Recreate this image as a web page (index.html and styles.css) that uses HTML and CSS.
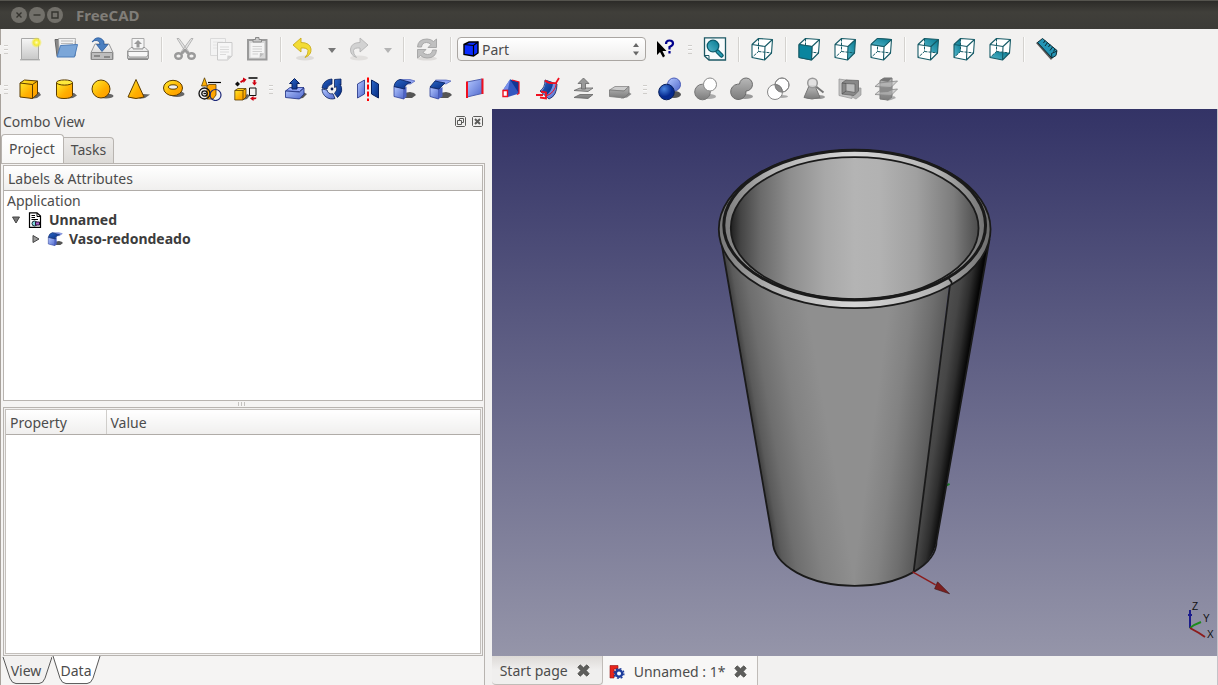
FILE: index.html
```html
<!DOCTYPE html>
<html lang="en">
<head>
    <meta charset="UTF-8">
    <meta name="viewport" content="width=device-width, initial-scale=1.0">
    <title>FreeCAD</title>
    <link rel="stylesheet" href="styles.css">
</head>
<body>
    <!-- Shared gradients and symbols -->
    <svg class="defs" width="0" height="0" aria-hidden="true">
        <defs>
            <linearGradient id="gold" x1="0" y1="0" x2="1" y2="1"><stop offset="0" stop-color="#ffee30"/><stop offset=".6" stop-color="#ffae00"/><stop offset="1" stop-color="#ff9a00"/></linearGradient>
            <linearGradient id="blue" x1="0" y1="0" x2="1" y2="1"><stop offset="0" stop-color="#2c68c8"/><stop offset="1" stop-color="#062a80"/></linearGradient>
            <linearGradient id="lilac" x1="0" y1="0" x2="1" y2="1"><stop offset="0" stop-color="#b4c8ff"/><stop offset="1" stop-color="#5068cc"/></linearGradient>
            <linearGradient id="grey" x1="0" y1="0" x2="0" y2="1"><stop offset="0" stop-color="#b8b8b8"/><stop offset="1" stop-color="#7c7c7c"/></linearGradient>
            <linearGradient id="pale" x1="0" y1="0" x2="0" y2="1"><stop offset="0" stop-color="#f6f6f6"/><stop offset="1" stop-color="#c8c8c8"/></linearGradient>
            <linearGradient id="teal" x1="0" y1="1" x2="1" y2="0"><stop offset="0" stop-color="#57b8cc"/><stop offset="1" stop-color="#04788f"/></linearGradient>
            <radialGradient id="ball" cx=".35" cy=".3"><stop offset="0" stop-color="#4a86e0"/><stop offset="1" stop-color="#062a90"/></radialGradient>
            <radialGradient id="sun"><stop offset="0" stop-color="#fffcc0"/><stop offset=".5" stop-color="#f4ea30"/><stop offset="1" stop-color="#f4ea30" stop-opacity="0"/></radialGradient>
        </defs>
        <symbol id="wire" viewBox="0 0 24 24">
            <path class="dash" d="M8.500 1.500V14.500L2 20.500M8.500 14.500L22 16"/>
            <path class="edge" d="M2 7.500L15 9.500L14.500 23L2 20.500ZM2 7.500L8.500 1.500L22.500 2.500L15 9.500M22.500 2.500L21.500 16L14.500 23"/>
        </symbol>
        <symbol id="rounded" viewBox="0 0 24 24">
            <path fill="#555" d="M12 20V16L18 15L22 16L24 18L20 21H12Z"/>
            <path fill="url(#lilac)" stroke="#2c3f98" stroke-width=".8" d="M2 9.500L12 11.500V22L2 19.500Z"/>
            <path fill="#4c62c4" d="M12 11.500L14.500 9.500V19.500L12 22Z"/>
            <path fill="#8fa3f2" stroke="#3c50b0" stroke-width=".6" d="M8 2.500H18L23 4L18.500 7H12Z"/>
            <path fill="url(#blue)" stroke="#08205c" stroke-width=".8" d="M2 9.500Q3 3.500 8 2.500L19 5.500Q13 6.500 12.500 12Z"/>
        </symbol>
        <symbol id="bevel" viewBox="0 0 24 24">
            <path fill="#555" d="M12 20V16L18 15L22 16L24 18L20 21H12Z"/>
            <path fill="url(#lilac)" stroke="#2c3f98" stroke-width=".8" d="M2 10.500L10.500 12V22L2 19.500Z"/>
            <path fill="#4c62c4" d="M10.500 12L14.500 10V19.500L10.500 22Z"/>
            <path fill="#8fa3f2" stroke="#3c50b0" stroke-width=".6" d="M7.500 3H18L23 4L18 7L8 5Z"/>
            <path fill="url(#blue)" stroke="#08205c" stroke-width=".8" d="M2 10L7 4L17 6L11 12Z"/>
        </symbol>
        <symbol id="close" viewBox="0 0 12 12">
            <path fill="#5e5e5c" stroke="#4a4a48" stroke-width=".8" d="M3 .8L6 3.500L9 .8L11.200 3L8.500 6L11.200 9L9 11.200L6 8.500L3 11.200L.8 9L3.500 6L.8 3Z"/>
        </symbol>
    </svg>

    <header class="titlebar">
        <button class="win-btn" aria-label="Close"><svg viewBox="0 0 16 16"><path d="M5.500 5.500L10.500 10.500M10.500 5.500L5.500 10.500"/></svg></button>
        <button class="win-btn" aria-label="Minimize"><svg viewBox="0 0 16 16"><path d="M4.500 8H11.500"/></svg></button>
        <button class="win-btn" aria-label="Maximize"><svg viewBox="0 0 16 16"><path d="M5 5H11V11H5Z"/></svg></button>
        <h1>FreeCAD</h1>
    </header>

    <!-- File, edit and view tools -->
    <div class="toolbar" role="toolbar" aria-label="Main">
        <span class="grip"></span>
        <button class="tool" aria-label="New"><svg viewBox="0 0 24 24"><path fill="#bbb" d="M2 22H22V23.500H2Z"/><path fill="url(#pale)" stroke="#a8a8a8" d="M3.500 1.500H20.500V22.500H3.500Z"/><circle cx="18.500" cy="5.500" r="5.500" fill="url(#sun)"/></svg></button>
        <button class="tool" aria-label="Open"><svg viewBox="0 0 24 24"><path fill="#888" stroke="#666" d="M1 2.500H8L9.500 4H21V19H3Z"/><path fill="#f2f2f2" stroke="#999" stroke-width=".7" d="M4.500 1.500H21.500L20.500 12H5Z"/><path stroke="#bbb" d="M7 4H19M7 6.500H19"/><path fill="#7ba6d8" stroke="#4c7cb8" d="M6.500 8.500L23.500 7.500L20.500 20H3Z"/></svg></button>
        <button class="tool" aria-label="Save"><svg viewBox="0 0 24 24"><path fill="url(#pale)" stroke="#999" d="M5 7H19L23 15.500V22.500H1V15.500Z"/><path fill="#bdbdbd" stroke="#888" d="M1.500 15.500H22.500V22.500H1.500Z"/><path stroke="#777" stroke-width="1.500" d="M4 19H10M14 20H20"/><path fill="#4a7fc0" stroke="#2c5c9c" stroke-width=".8" d="M2 5Q6-1 11 1.500Q15 3.500 14 7.500H18L12 14.500L6.500 7.500H10Q10 4 7 3.500Q4.500 3 2 5Z"/></svg></button>
        <button class="tool" aria-label="Print"><svg viewBox="0 0 24 24"><path fill="#f5f5f5" stroke="#aaa" d="M6 1.500H18V12H6Z"/><path fill="#999" d="M12 3L16 7H13.500V10.500H10.500V7H8Z"/><path fill="url(#pale)" stroke="#999" d="M5 10.500H7V12H17V10.500H19L22.500 14V21.500H1.500V14Z"/><path fill="#f7f7f7" stroke="#999" d="M2 14.500H22V18L20.500 20H3.500L2 18Z"/><path stroke="#888" d="M2 22.500H22"/></svg></button>
        <span class="sep"></span>
        <button class="tool" aria-label="Cut"><svg viewBox="0 0 24 24"><path fill="#e3e3e3" stroke="#a8a8a8" stroke-width=".8" d="M4 1.500L6 1.500L16 15L13.500 16.500ZM20 1.500L18 1.500L8 15L10.500 16.500Z"/><g stroke="#9a9a9a" stroke-width="2.400"><ellipse cx="5.500" cy="19" rx="3.300" ry="2.800"/><ellipse cx="18.500" cy="19" rx="3.300" ry="2.800"/><path d="M8 17L12 13L16 17"/></g></svg></button>
        <button class="tool" aria-label="Copy"><svg viewBox="0 0 24 24"><path fill="#f3f3f3" stroke="#dadada" d="M1.500 1.500H16.500V18.500H1.500Z"/><path stroke="#e4e4e4" d="M4 5H14M4 8H14M4 11H10"/><path fill="#f6f6f6" stroke="#cacaca" d="M8.500 5.500H23V19L18.500 23H8.500Z"/><path stroke="#dadada" d="M11 10H20M11 12.500H20M11 15H20M11 17.500H17"/><path fill="#d0d0d0" d="M18 23L18.500 18.500L23 19Z"/></svg></button>
        <button class="tool" aria-label="Paste"><svg viewBox="0 0 24 24"><path fill="#d8d8d8" stroke="#9a9a9a" stroke-width="2" d="M3 3H21.500V22.500H3Z"/><path fill="#f4f4f4" d="M5.500 6H19V16L15 20.500H5.500Z"/><path stroke="#d0d0d0" d="M7.500 9.500H17M7.500 12H17M7.500 14.500H17M7.500 17H13"/><path fill="#bbb" d="M14.500 21L15 16L19 16.500Z"/><path fill="#c8c8c8" stroke="#8a8a8a" d="M8 5V2.500H10.500V.5H14V2.500H16.500V5Z"/></svg></button>
        <span class="sep"></span>
        <button class="tool" aria-label="Undo"><svg viewBox="0 0 24 24"><ellipse cx="13" cy="21" rx="9" ry="2.500" fill="#dedcda"/><path fill="#f3dc35" stroke="#c9ac1c" stroke-width=".9" d="M9 1L1 8L9 15V11Q15 10.500 16 13.500Q16.500 17 13 20.500Q19.500 18 19 12Q18 5.500 9 5.500Z"/></svg></button>
        <button class="drop" aria-label="Undo history"></button>
        <button class="tool" aria-label="Redo"><svg viewBox="0 0 24 24"><ellipse cx="11" cy="21" rx="9" ry="2.500" fill="#e2e0de"/><path fill="#d2d2d2" stroke="#b4b4b4" stroke-width=".9" d="M12 1L20 8L12 15V11Q6 10.500 5.500 13.500Q5 17 8.500 20.500Q2 18 2.500 12Q3.500 5.500 12 5.500Z"/></svg></button>
        <button class="drop off" aria-label="Redo history"></button>
        <span class="sep"></span>
        <button class="tool" aria-label="Refresh"><svg viewBox="0 0 24 24"><ellipse cx="12" cy="21.500" rx="10" ry="2" fill="#dedcda"/><g fill="#c0c0c0" stroke="#a4a4a4" stroke-width=".9"><path d="M2.500 10Q3 2 12 2Q16 2 18.500 4.500L21.500 2V10.500H13L16 7.500Q14 5.500 11.500 5.500Q7 5.500 6.500 10Z"/><path d="M21.500 13Q21 21 12 21Q8 21 5.500 18.500L2.500 21V12.500H11L8 15.500Q10 17.500 12.500 17.500Q17 17.500 17.500 13Z"/></g></svg></button>
        <span class="sep"></span>
        <label class="workbench">
            <svg viewBox="0 0 16 16"><path fill="#0a2cff" stroke="#000" stroke-width="1.400" d="M1 3.500L6 1H15V12L10.500 15L1 13.500Z"/><path stroke="#000" stroke-width="1.200" d="M1 3.500L10.500 4.500L15 1M10.500 4.500V15"/></svg>
            <select aria-label="Workbench"><option>Part</option></select>
            <svg class="arrows" viewBox="0 0 8 14"><path fill="#666" d="M1 5L4 1L7 5ZM1 9.500L4 13.500L7 9.500Z"/></svg>
        </label>
        <button class="tool" aria-label="What's this?"><svg viewBox="0 0 24 24"><path fill="#000" d="M4 4V18L7 15L10 20.500L12 19L9.500 14H13.500Z"/><path stroke="#00008c" stroke-width="2.200" d="M13 7Q13 3.500 16.500 3.500Q20 3.500 20 6.500Q20 8.500 16.500 10V12.500M16.500 14V16.500"/></svg></button>
        <span class="grip"></span>
        <button class="tool" aria-label="Fit all"><svg viewBox="0 0 24 24"><path fill="#f7fbfc" stroke="#1c5864" stroke-width="1.300" d="M1.500 .8H22.500V23H6L1.500 19Z"/><path stroke="#1c5864" d="M1.500 18.500H6V23"/><path stroke="#0c5c6c" stroke-width="4.500" stroke-linecap="round" d="M14.500 14.500L18.500 18.500"/><path stroke="#259bb2" stroke-width="2" stroke-linecap="round" d="M14.500 14.500L18.500 18.500"/><circle cx="10" cy="9" r="5.800" fill="url(#teal)" stroke="#0c5c6c" stroke-width="1.300"/></svg></button>
        <span class="sep"></span>
        <button class="tool" aria-label="Axometric"><svg viewBox="0 0 24 24"><path fill="#fff" d="M2 7.500L8.500 1.500L22.500 2.500L21.500 16L14.500 23L2 20.500Z"/><use href="#wire"/></svg></button>
        <span class="sep"></span>
        <button class="tool" aria-label="Front"><svg viewBox="0 0 24 24"><path fill="#fff" d="M2 7.500L8.500 1.500L22.500 2.500L21.500 16L14.500 23L2 20.500Z"/><use href="#wire"/><path fill="#0a859e" stroke="#155a66" d="M2 7.500L15 9.500L14.500 23L2 20.500Z"/></svg></button>
        <button class="tool" aria-label="Right"><svg viewBox="0 0 24 24"><path fill="#fff" d="M2 7.500L8.500 1.500L22.500 2.500L21.500 16L14.500 23L2 20.500Z"/><path fill="url(#teal)" d="M15 9.500L22.500 2.500L21.500 16L14.500 23Z"/><use href="#wire"/></svg></button>
        <button class="tool" aria-label="Top"><svg viewBox="0 0 24 24"><path fill="#fff" d="M2 7.500L8.500 1.500L22.500 2.500L21.500 16L14.500 23L2 20.500Z"/><use href="#wire"/><path fill="url(#teal)" stroke="#155a66" d="M2 7.500L8.500 1.500L22.500 2.500L15 9.500Z"/></svg></button>
        <span class="sep"></span>
        <button class="tool" aria-label="Rear"><svg viewBox="0 0 24 24"><path fill="#fff" d="M2 7.500L8.500 1.500L22.500 2.500L21.500 16L14.500 23L2 20.500Z"/><path fill="url(#teal)" d="M8.500 1.500L22.500 2.500L21.500 16L15 15V9.500L8.500 8.500Z"/><use href="#wire"/></svg></button>
        <button class="tool" aria-label="Left"><svg viewBox="0 0 24 24"><path fill="#fff" d="M2 7.500L8.500 1.500L22.500 2.500L21.500 16L14.500 23L2 20.500Z"/><path fill="url(#teal)" d="M2 7.500L8.500 1.500V14.500L2 20.500Z"/><use href="#wire"/></svg></button>
        <button class="tool" aria-label="Bottom"><svg viewBox="0 0 24 24"><path fill="#fff" d="M2 7.500L8.500 1.500L22.500 2.500L21.500 16L14.500 23L2 20.500Z"/><path fill="url(#teal)" d="M2 20.500L8.500 14.500L21.500 16L14.500 23Z"/><use href="#wire"/></svg></button>
        <span class="sep"></span>
        <button class="tool" aria-label="Measure distance"><svg viewBox="0 0 24 24"><path fill="#555" d="M1 6L4 4L20 18L16 23Z"/><path fill="#2494b4" stroke="#0c2c34" d="M2.500 5.500L7.500 1.500L22 13.500L21 18.500L17 21Z"/><path stroke="#0c2c34" d="M10 3.500L8.500 6M12.500 5.500L10 9M15 7.500L13.500 10M17.500 10L15 13.500M20 12L18.500 14.500M17 21L16.500 16.500L22 14"/></svg></button>
    </div>

    <!-- Part workbench tools -->
    <div class="toolbar" role="toolbar" aria-label="Part">
        <span class="grip"></span>
        <button class="tool" aria-label="Box"><svg viewBox="0 0 24 24"><path fill="#666" d="M12 22L17 15H21L23 18L19 21Z"/><path fill="url(#gold)" stroke="#5c3c00" d="M2 6L6.500 3L19.500 4V17L14.500 21.500L2 20Z"/><path stroke="#5c3c00" d="M2 6L14.500 7.500L19.500 4M14.500 7.500V21.500"/></svg></button>
        <button class="tool" aria-label="Cylinder"><svg viewBox="0 0 24 24"><path fill="#666" d="M14 21.500L17 16H20L23 18.500L19 21Z"/><path fill="url(#gold)" stroke="#5c3c00" d="M2.500 5.500V18.500Q3 21.500 10 21.500T18.500 18.500V5.500"/><ellipse cx="10.500" cy="5.500" rx="8" ry="2.600" fill="#ffe93c" stroke="#5c3c00"/></svg></button>
        <button class="tool" aria-label="Sphere"><svg viewBox="0 0 24 24"><ellipse cx="16" cy="19" rx="7.500" ry="2.600" fill="#666"/><circle cx="11" cy="12" r="9" fill="url(#gold)" stroke="#5c3c00"/></svg></button>
        <button class="tool" aria-label="Cone"><svg viewBox="0 0 24 24"><path fill="#666" d="M13 22L17 17L24 17.500L19 21Z"/><path fill="url(#gold)" stroke="#5c3c00" d="M10 2.500L18 20Q10 23 2 20Z"/></svg></button>
        <button class="tool" aria-label="Torus"><svg viewBox="0 0 24 24"><ellipse cx="15" cy="17" rx="7.500" ry="3" fill="#666"/><ellipse cx="11" cy="11" rx="9.500" ry="7.700" fill="url(#gold)" stroke="#5c3c00"/><ellipse cx="11" cy="10" rx="4.500" ry="2.200" fill="#f2f1f0" stroke="#5c3c00"/></svg></button>
        <button class="tool" aria-label="Create primitives"><svg viewBox="0 0 24 24"><path fill="url(#gold)" stroke="#5c3c00" stroke-width=".8" d="M6.500 .8L9.500 9H3.500Z"/><path stroke="#000" stroke-width="1.200" d="M10 5.500H23"/><path fill="#ffa500" stroke="#5c3c00" stroke-width=".8" d="M9 9L11 7.500H18V18L15 22H9Z"/><g stroke="#111" stroke-width="1.300"><circle cx="6.500" cy="16.500" r="5.500"/><circle cx="6.500" cy="16.500" r="2.700"/><path d="M5.500 16.500H8"/></g><circle cx="17.500" cy="18" r="5.500" stroke="#1d2878" stroke-width="1.200"/></svg></button>
        <button class="tool" aria-label="Shape builder"><svg viewBox="0 0 24 24"><path fill="#666" d="M9 23L13 17L16 18.500L13 22Z"/><path fill="url(#gold)" stroke="#5c3c00" stroke-width=".8" d="M.8 13.500L4 11.500H12V20L9 23H.8Z"/><path stroke="#5c3c00" stroke-width=".8" d="M.8 13.500H9V23M9 13.500L12 11.500"/><path fill="#111" d="M3.500 4.500L6 7L3.500 9.500L1 7Z"/><path stroke="#111" stroke-width="1.600" d="M14.500 1H23.500"/><path stroke="#111" d="M15.500 11H22V18.500H15.500Z"/><path fill="#d00010" d="M6 4.500L9 2.500V.5L12.500 2.500L9.500 6V4.500L7 6ZM19.500 3H21.500V5.500H23L20.500 8.500L18 5.500H19.500ZM22.500 20.500L19.500 20.500V19L16 21.500L19.500 24V22.500L22 22Z"/></svg></button>
        <span class="grip"></span>
        <button class="tool" aria-label="Extrude"><svg viewBox="0 0 24 24"><path fill="#555" d="M13 22L19 15L23 17L19 21Z"/><path fill="#96aafa" stroke="#1b2c80" stroke-width=".8" d="M1.500 14L6 10.500H20L15.500 14.500Z"/><path fill="url(#lilac)" stroke="#1b2c80" stroke-width=".8" d="M1.500 14L15.500 15L20 11V17L15.500 22L1.500 20.500Z"/><path fill="url(#blue)" stroke="#08205c" d="M10.500 1.500L15.500 6.500H13V12H8V6.500H5.500Z"/></svg></button>
        <button class="tool" aria-label="Revolve"><svg viewBox="0 0 24 24"><path fill="url(#blue)" stroke="#08205c" stroke-width=".8" d="M12 2A10 10 0 0 0 2 11L7 12Q7.500 8 12 7Z"/><path fill="url(#lilac)" stroke="#08205c" stroke-width=".8" d="M2 12A10 10 0 0 0 15 21.500L13 16.800Q8 17.500 7 13Z"/><path fill="url(#blue)" stroke="#08205c" stroke-width=".8" d="M14.500 2.500L21 2V8L20 7Q24.500 14 17.500 20.500L14.500 16.500Q18 13 16.500 9.500L14.500 10.500Z"/><circle cx="12" cy="12" r="1.400" fill="#08205c"/></svg></button>
        <button class="tool" aria-label="Mirror"><svg viewBox="0 0 24 24"><path fill="url(#lilac)" stroke="#1b2c80" stroke-width=".8" d="M1.500 7L8.500 3V17L1.500 21Z"/><path fill="url(#blue)" stroke="#08205c" d="M15.500 3L22.500 7V21L15.500 17Z"/><path stroke="#f00" stroke-width="2" stroke-dasharray="5 2" d="M12 .5V24"/></svg></button>
        <button class="tool" aria-label="Fillet"><svg viewBox="0 0 24 24"><use href="#rounded"/></svg></button>
        <button class="tool" aria-label="Chamfer"><svg viewBox="0 0 24 24"><use href="#bevel"/></svg></button>
        <button class="tool" aria-label="Ruled surface"><svg viewBox="0 0 24 24"><path fill="url(#lilac)" stroke="#5062b0" d="M3 5L18 2V16.500L3 20Z"/><path stroke="#f01020" stroke-width="2" d="M3 4.500V21M18.500 1.500V17"/></svg></button>
        <button class="tool" aria-label="Loft"><svg viewBox="0 0 24 24"><path fill="#3458c0" d="M10 2.500L19 5V16.500L8 20L3 13Z"/><path fill="#7890ea" d="M10 2.500L8 12.500L3 13Z"/><path fill="#123694" d="M10 2.500L19 5V16.500Z"/><path stroke="#f01020" stroke-width="1.200" d="M12 3L19 5V16.500L17 17.500"/><path fill="#fff" stroke="#f01020" stroke-width="1.400" d="M3 13.500H7.500V19.500H3Z"/></svg></button>
        <button class="tool" aria-label="Sweep"><svg viewBox="0 0 24 24"><path fill="url(#lilac)" stroke="#08205c" stroke-width=".8" d="M9 3Q9 11 4 14L13 22Q21 19 21 7Z"/><path fill="url(#blue)" d="M9.500 3Q10 10 6 13.500L11 18Q17 12 17 5.500Z"/><path stroke="#f01020" stroke-width="1.800" d="M0 18H7M9 3.500Q13 7 20 6L23 1M5 14.500L10 15.500V21.500L4 20.500"/><path stroke="#f01020" d="M10 19Q19 16 20.500 6"/></svg></button>
        <button class="tool" aria-label="Offset"><svg viewBox="0 0 24 24"><path fill="url(#grey)" stroke="#666" stroke-width=".8" d="M2 20.500L8 17.500H21L16 21.500ZM2 13.500L8 11H21L16 14.500Z"/><path fill="#999" stroke="#666" stroke-width=".8" d="M11.500 1L17 6.500H13.500V12H9.500V6.500H6Z"/></svg></button>
        <button class="tool" aria-label="Thickness"><svg viewBox="0 0 24 24"><path fill="#888" d="M13 21.500L19 14L23.500 17L19 20.500Z"/><path fill="#ccc" stroke="#888" stroke-width=".8" d="M1.500 13L7 9.500H21L16 14Z"/><path fill="url(#grey)" stroke="#777" stroke-width=".8" d="M1.500 13L16 14L21 9.500V16L16 21L1.500 19.500Z"/></svg></button>
        <span class="grip"></span>
        <button class="tool" aria-label="Boolean"><svg viewBox="0 0 24 24"><ellipse cx="16" cy="17.500" rx="7" ry="3.500" fill="#555"/><circle cx="16" cy="7.500" r="6.500" fill="url(#lilac)" stroke="#4a5cb8"/><circle cx="8.500" cy="15" r="7.800" fill="url(#ball)" stroke="#08205c"/></svg></button>
        <button class="tool" aria-label="Cut shapes"><svg viewBox="0 0 24 24"><ellipse cx="15" cy="19.500" rx="7" ry="2.500" fill="#aaa"/><circle cx="8.500" cy="15" r="7.800" fill="url(#grey)" stroke="#777"/><circle cx="16" cy="7.500" r="6.500" fill="#fff" stroke="#8a8a8a"/></svg></button>
        <button class="tool" aria-label="Union"><svg viewBox="0 0 24 24"><ellipse cx="15" cy="19.500" rx="8" ry="2.500" fill="#999"/><path fill="url(#grey)" stroke="#6c6c6c" d="M9.500 7A6.500 6.500 0 1 1 16 14A7.700 7.700 0 1 1 7.500 7.200Z"/></svg></button>
        <button class="tool" aria-label="Intersection"><svg viewBox="0 0 24 24"><ellipse cx="16" cy="19.500" rx="6" ry="1.500" fill="#aaa"/><g fill="#fff" stroke="#888"><circle cx="16" cy="8" r="7"/><circle cx="9" cy="15" r="7.500"/></g><path fill="#8c8c8c" stroke="#777" d="M9.200 7.500Q16 8 16.300 15Q9.500 15 9.200 7.500Z"/><circle cx="16" cy="8" r="7" stroke="#888"/></svg></button>
        <button class="tool" aria-label="Check geometry"><svg viewBox="0 0 24 24"><ellipse cx="16" cy="20" rx="7" ry="2" fill="#999"/><path fill="url(#grey)" stroke="#777" d="M7 9H13L18 20.500Q10 23.500 2 20.500Z"/><path stroke="#777" stroke-width="2" d="M14 9.500L21.500 15.500"/><circle cx="10.500" cy="6" r="4.800" fill="#ddd" fill-opacity=".8" stroke="#999" stroke-width="1.500"/></svg></button>
        <button class="tool" aria-label="Section"><svg viewBox="0 0 24 24"><path fill="#b4b4b4" stroke="#999" stroke-width=".7" d="M14 11H23V18L18 22L12 19Z"/><path fill="#c4c4c4" stroke="#999" stroke-width=".8" d="M1 2L14 4V21.500L1 18.500Z"/><path fill="#888" stroke="#666" stroke-width=".8" d="M4 6L8 3L20.500 3.500V14L16 18.500L4 17Z"/><path fill="#bcbcbc" stroke="#666" stroke-width=".8" d="M8 6.500L17 7V15.500L8 14Z"/><path stroke="#555" stroke-width=".8" d="M4 6L8 6.500M4 17L8 14"/></svg></button>
        <button class="tool" aria-label="Cross sections"><svg viewBox="0 0 24 24"><path fill="#aaa" d="M12 24L20 19L22 21L17 23Z"/><path fill="url(#grey)" stroke="#777" d="M6 3.500L10 1H18V20L14 23L6 22Z"/><path fill="#777" d="M6 3.500L10 1H18L14 5Z"/><path fill="#bbb" fill-opacity=".6" stroke="#888" stroke-width=".8" d="M1 9.500L5 6L23.500 4L17 10.500ZM1 17.500L5 14L23.500 12L17 18.500Z"/><path fill="#8a8a8a" d="M6 10.200L14 10.500V15L6 15.500ZM14 10.500L18 9.500V13L14 15Z"/></svg></button>
    </div>

    <main class="workspace">
        <aside class="combo">
            <div class="dock-title">
                <h2>Combo View</h2>
                <button class="dock-btn" aria-label="Float"><svg viewBox="0 0 11 11"><path d="M1.500 .5H9.500L10.500 1.500V9.500L9.500 10.500H1.500L.5 9.500V1.500ZM2.500 4.500H6.500V8.500H2.500ZM4.500 4V2.500H8.500V6.500H7"/></svg></button>
                <button class="dock-btn" aria-label="Close panel"><svg viewBox="0 0 11 11"><path d="M1.500 .5H9.500L10.500 1.500V9.500L9.500 10.500H1.500L.5 9.500V1.500Z"/><path stroke-width="2" d="M3 3L8 8M8 3L3 8"/></svg></button>
            </div>
            <div class="tabs" role="tablist">
                <button class="tab active" role="tab" aria-selected="true">Project</button>
                <button class="tab" role="tab" aria-selected="false">Tasks</button>
            </div>
            <div class="pane">
                <section class="tree">
                    <div class="tree-head">Labels &amp; Attributes</div>
                    <ul>
                        <li>Application</li>
                        <li class="doc">
                            <svg class="expander" viewBox="0 0 10 10"><path fill="#777" stroke="#444" d="M1.500 2H8.500L5 8Z"/></svg>
                            <svg class="node-icon" viewBox="0 0 16 16"><path fill="#fff" stroke="#000" stroke-width="1.200" d="M2.500 .8H10L13.500 4V15.300H2.500Z"/><path stroke="#000" d="M10 1V4.500H13M4.500 3.500H8M4.500 5.500H8M4.500 7.500H11"/><circle cx="7.500" cy="11.500" r="2.500" fill="#7fd8dc" stroke="#123"/><path fill="#b060d0" stroke="#213" d="M8.500 10H12.500V13H8.500Z"/></svg>
                            <span>Unnamed</span>
                        </li>
                        <li class="part">
                            <svg class="expander" viewBox="0 0 10 10"><path fill="#999" stroke="#444" d="M2 1.500V8.500L8 5Z"/></svg>
                            <svg class="node-icon" viewBox="0 0 24 24"><use href="#rounded"/></svg>
                            <span>Vaso-redondeado</span>
                        </li>
                    </ul>
                </section>
                <div class="splitter"></div>
                <section class="props">
                    <table>
                        <thead>
                            <tr><th class="name">Property</th><th>Value</th></tr>
                        </thead>
                    </table>
                </section>
                <div class="sheet-tabs" role="tablist">
                    <button class="sheet" role="tab" aria-selected="false"><svg viewBox="0 0 50 30" preserveAspectRatio="none"><path fill="#f2f1f0" stroke="#555" d="M1 1L8 23Q10 28.500 14 28.500H37Q41 28.500 43 23L50 1"/></svg><span>View</span></button>
                    <button class="sheet" role="tab" aria-selected="true"><svg viewBox="0 0 50 30" preserveAspectRatio="none"><path fill="#fff" stroke="#555" d="M1 0L8 23Q10 28.500 14 28.500H35Q39 28.500 41 23L48 0"/></svg><span>Data</span></button>
                </div>
            </div>
        </aside>

        <section class="viewer">
            <div class="canvas">
                <svg class="model" viewBox="0 0 726 547" role="img" aria-label="Vaso-redondeado">
                    <defs>
                        <linearGradient id="bodyL" gradientUnits="userSpaceOnUse" x1="254" y1="280" x2="352" y2="263"><stop offset="0" stop-color="#3c3c3c"/><stop offset=".07" stop-color="#5a5a5a"/><stop offset=".2" stop-color="#6e6e6e"/><stop offset=".45" stop-color="#828282"/><stop offset=".75" stop-color="#8f8f8f"/></linearGradient>
                        <linearGradient id="bodyR" gradientUnits="userSpaceOnUse" x1="341" y1="304" x2="440" y2="317"><stop offset=".42" stop-color="#8f8f8f"/><stop offset=".65" stop-color="#828282"/><stop offset=".85" stop-color="#6e6e6e"/><stop offset="1" stop-color="#5a5a5a"/></linearGradient>
                        <linearGradient id="shade" gradientUnits="userSpaceOnUse" x1="434" y1="274" x2="471" y2="280"><stop offset="0" stop-color="#565656"/><stop offset=".5" stop-color="#464646"/><stop offset=".75" stop-color="#2e2e2e"/><stop offset="1" stop-color="#050505"/></linearGradient>
                        <linearGradient id="inside"><stop offset="0" stop-color="#202020"/><stop offset=".04" stop-color="#444"/><stop offset=".12" stop-color="#6a6a6a"/><stop offset=".24" stop-color="#8e8e8e"/><stop offset=".38" stop-color="#a8a8a8"/><stop offset=".5" stop-color="#b4b4b4"/><stop offset=".6" stop-color="#b2b2b2"/><stop offset=".75" stop-color="#a0a0a0"/><stop offset=".9" stop-color="#7c7c7c"/><stop offset="1" stop-color="#4c4c4c"/></linearGradient>
                        <linearGradient id="rim"><stop offset="0" stop-color="#777"/><stop offset=".2" stop-color="#b4b4b4"/><stop offset=".5" stop-color="#d6d6d6"/><stop offset=".8" stop-color="#b4b4b4"/><stop offset="1" stop-color="#6c6c6c"/></linearGradient>
                    </defs>
                    <path stroke="#1c7a28" stroke-width="2" d="M450 379L458 375"/>
                    <path fill="url(#bodyL)" d="M229 130L281 432A82 45 0 0 0 364 477V130Z"/>
                    <path fill="url(#bodyR)" d="M363 130V477A82 45 0 0 0 422 463L463 130Z"/>
                    <path fill="url(#shade)" d="M459 171L422 463Q442 452 445 432L498 130Z"/>
                    <path class="outline" d="M229 130L281 432A82 45 0 0 0 445 432L498 130M459 171L422 463"/>
                    <ellipse class="outline" cx="363" cy="120" rx="136" ry="79" fill="url(#rim)"/>
                    <ellipse class="outline" cx="363" cy="119" rx="124" ry="71" fill="url(#inside)"/>
                    <ellipse class="outline thick" cx="363" cy="116" rx="131" ry="75"/>
                    <path class="outline" d="M457 169L460 173V176"/>
                    <path stroke="#8c1c1c" stroke-width="1.500" d="M421 463L444 476"/>
                    <path fill="#7c1f1f" stroke="#3c1010" stroke-width=".6" d="M446 473L458 485L443 480Z"/>
                </svg>
                <svg class="axes" viewBox="0 0 30 42" aria-label="Axes">
                    <path stroke="#1c1c8c" stroke-width="2" d="M4 28V10M2 15H6"/>
                    <path stroke="#1c8c1c" stroke-width="2" d="M4 28L8 25L15 22"/>
                    <path stroke="#8c1c1c" stroke-width="2" d="M4 28L13 33L19 37"/>
                    <text x="6" y="10">Z</text>
                    <text x="17" y="22">Y</text>
                    <text x="21" y="38">X</text>
                </svg>
            </div>
            <div class="doc-tabs">
                <div class="doc-tab">
                    <button class="doc-name">Start page</button>
                    <button class="doc-close" aria-label="Close Start page"><svg viewBox="0 0 12 12"><use href="#close"/></svg></button>
                </div>
                <div class="doc-tab active">
                    <svg class="logo" viewBox="0 0 16 16"><path fill="#e8251c" stroke="#901010" stroke-width=".6" d="M1 1.500H9V5H5V7H8V10H5V14H1Z"/><circle cx="10" cy="9.500" r="3.200" fill="#fff" stroke="#1c3c9c" stroke-width="2.400"/><circle cx="10" cy="9.500" r="4.900" stroke="#1c3c9c" stroke-width="1.400" stroke-dasharray="1.900 1.950"/></svg>
                    <button class="doc-name">Unnamed : 1*</button>
                    <button class="doc-close" aria-label="Close Unnamed"><svg viewBox="0 0 12 12"><use href="#close"/></svg></button>
                </div>
            </div>
        </section>
    </main>
</body>
</html>
```
FILE: styles.css
```css
/* General styling for the whole window */
* {
    box-sizing: border-box;
}

body {
    display: flex;
    flex-direction: column;
    height: 100vh;
    margin: 0;
    background-color: #f2f1f0;
    color: #4c4c4c;
    font-family: "Noto Sans", "Open Sans", sans-serif;
    font-size: 14px;
    line-height: 19px;
    overflow: hidden;
}

button, select {
    padding: 0;
    border: none;
    background: none;
    color: inherit;
    font: inherit;
}

svg {
    display: block;
    fill: none;
}

.defs {
    position: absolute;
}

h1, h2 {
    margin: 0;
    font-size: 14px;
}

/* Title bar */
.titlebar {
    display: flex;
    flex: none;
    align-items: center;
    gap: 2px;
    height: 29px;
    padding: 0 11px;
    border-top: 1px solid #55544e;
    background: linear-gradient(#2c2b28, #403f3a 40%, #3c3b37);
}

.titlebar h1 {
    margin-left: 11px;
    color: #807d78;
    font-size: 15px;
}

.win-btn {
    width: 16px;
    height: 16px;
    border-radius: 8px;
    background-color: #72706a;
}

.win-btn svg {
    stroke: #35342f;
    stroke-width: 1.4;
}

/* Toolbars */
.toolbar {
    display: flex;
    flex: none;
    align-items: center;
    height: 40px;
    box-shadow: inset 1px 0 #a8a29c;
}

.grip {
    flex: none;
    width: 12px;
    height: 9px;
    border: solid #f2f1f0;
    border-width: 0 4px 0 4px;
    background: repeating-linear-gradient(#cfcdca 0 1px, #fafafa 1px 2px, #f2f1f0 2px 4px);
}

.tool + .grip {
    margin: 0 1px;
}

.tool {
    display: flex;
    flex: none;
    align-items: center;
    justify-content: center;
    width: 36px;
    height: 36px;
}

.tool svg {
    width: 24px;
    height: 24px;
}

.sep {
    flex: none;
    width: 11px;
    height: 25px;
    background: linear-gradient(90deg, #d4d2cf 50%, #fbfbfa 50%) center / 2px 100% no-repeat;
}

.drop {
    flex: none;
    width: 20px;
    height: 36px;
}

.drop::after {
    content: "";
    display: block;
    width: 0;
    margin: 2px auto 0;
    border: solid transparent;
    border-width: 5px 4px 0;
    border-top-color: #777;
}

.drop.off::after {
    border-top-color: #b4b4b4;
}

.edge {
    stroke: #155a66;
    stroke-width: 1.1;
    stroke-linejoin: round;
}

.dash {
    stroke: #155a66;
    stroke-dasharray: 3 1;
}

.workbench {
    display: flex;
    align-items: center;
    gap: 3px;
    width: 189px;
    height: 24px;
    margin: 0 1px;
    padding: 0 5px;
    border: 1px solid #aaa6a2;
    border-radius: 4px;
    background: linear-gradient(#fff, #eeedec);
}

.workbench svg {
    width: 16px;
    height: 16px;
}

.workbench .arrows {
    width: 8px;
    height: 14px;
}

.workbench select {
    flex: 1;
    appearance: none;
}

/* Main area */
.workspace {
    display: flex;
    flex: 1;
    min-height: 0;
    border-right: 1px solid #c4c2c8;
}

/* Combo view panel */
.combo {
    display: flex;
    flex-direction: column;
    width: 40.4%;
    padding-right: 7px;
    border-left: 1px solid #a8a29c;
}

.dock-title {
    display: flex;
    align-items: center;
    gap: 6px;
    height: 25px;
    padding: 0 2px;
}

.dock-title h2 {
    flex: 1;
    font-weight: normal;
}

.dock-btn svg {
    width: 11px;
    height: 11px;
    stroke: #5c5c5a;
}

.tabs {
    display: flex;
    align-items: flex-end;
    height: 29px;
}

.tab {
    height: 26px;
    padding: 0 7px 2px;
    border: 1px solid #b8b4b0;
    border-left: none;
    border-bottom: none;
    border-radius: 0 4px 0 0;
    background: linear-gradient(#eceae8, #dddbd8);
}

.tab.active {
    height: 29px;
    padding: 0 8px 2px 7px;
    border-left: 1px solid #b8b4b0;
    border-radius: 4px 4px 0 0;
    background: linear-gradient(#fff, #f7f7f6);
}

.pane {
    display: flex;
    flex: 1;
    flex-direction: column;
    min-height: 0;
    padding: 1px 1px 0 1px;
    border: solid #b8b4b0;
    border-width: 1px 1px 0 0;
    background-color: #f5f4f3;
}

.tree {
    flex: 237;
    margin-left: 1px;
    border: 1px solid #b8b4b0;
    background-color: #fff;
}

.tree-head {
    height: 25px;
    padding: 3px 4px;
    border-bottom: 1px solid #b0aca8;
    background: linear-gradient(#fff, #f0efee);
}

.tree ul {
    margin: 0;
    padding: 0 3px;
    list-style: none;
}

.tree li {
    display: flex;
    align-items: center;
    height: 19px;
}

.doc, .part {
    color: #3c3c3c;
    font-weight: bold;
}

.doc {
    padding-left: 4px;
}

.part {
    padding-left: 24px;
}

.expander {
    width: 10px;
    height: 10px;
}

.node-icon {
    width: 16px;
    height: 16px;
    margin: 0 6px;
}

.splitter {
    height: 6px;
    background: repeating-linear-gradient(90deg, #c4c2bf 0 1px, transparent 1px 3px) center / 8px 4px no-repeat;
}

.props {
    flex: 247;
    margin-left: 1px;
    padding: 2px;
    border: 1px solid #b8b4b0;
    background-color: #fff;
    box-shadow: inset 0 0 0 1px #f2f1f0, inset 0 0 0 2px #c4c0bc;
}

.props table {
    width: 100%;
    border-collapse: collapse;
}

.props th {
    height: 25px;
    padding: 1px 4px 0;
    border-bottom: 1px solid #b0aca8;
    background: linear-gradient(#fff, #f0efee);
    font-weight: normal;
    text-align: left;
}

.props .name {
    width: 100px;
    border-right: 1px solid #d0cecb;
}

/* View and Data tabs under the property table */
.sheet-tabs {
    display: flex;
    flex: none;
    height: 29px;
}

.sheet {
    position: relative;
    width: 50px;
    padding-right: 2px;
}

.sheet svg {
    position: absolute;
    top: 0;
    left: 0;
    width: 100%;
    height: 100%;
}

.sheet span {
    position: relative;
}

/* 3D viewer */
.viewer {
    display: flex;
    flex: 1;
    flex-direction: column;
    min-width: 0;
}

.canvas {
    position: relative;
    flex: 1;
    min-height: 0;
    background: linear-gradient(#333366, #9595a9);
}

.model {
    width: 100%;
    height: 100%;
}

.outline {
    stroke: #1a1a1a;
    stroke-width: 1.8;
}

.thick {
    stroke-width: 3;
}

.axes {
    position: absolute;
    right: 1px;
    bottom: 14px;
    width: 30px;
    height: 42px;
}

.axes text {
    fill: #111;
    font-family: "Liberation Sans", sans-serif;
    font-size: 10px;
}

/* Document tabs */
.doc-tabs {
    display: flex;
    flex: none;
    height: 29px;
}

.doc-tab {
    display: flex;
    align-items: center;
    gap: 9px;
    height: 29px;
    padding: 0 12px 0 8px;
    border: solid #c0bcb8;
    border-width: 0 1px 1px 0;
    border-radius: 0 0 4px 4px;
    background: linear-gradient(#dddad7, #f0efee 50%);
}

.doc-tab.active {
    padding: 2px 10px 0 6px;
    border-bottom: none;
    border-radius: 0;
    background: #f8f7f6;
}

.logo {
    width: 16px;
    height: 16px;
}

.doc-close svg {
    width: 13px;
    height: 13px;
}
```
